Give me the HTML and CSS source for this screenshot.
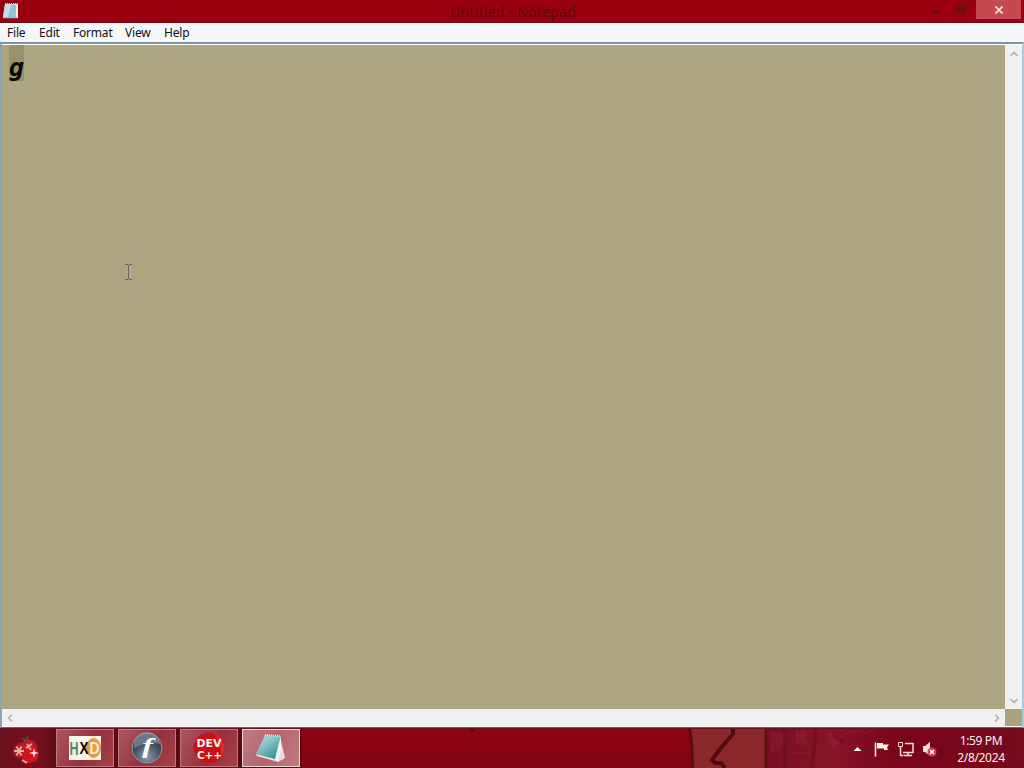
FILE: index.html
```html
<!DOCTYPE html>
<html lang="en">
<head>
<meta charset="UTF-8" />
<meta name="viewport" content="width=device-width, initial-scale=1" />
<title>Untitled - Notepad</title>
<link rel="stylesheet" href="styles.css">
</head>
<body>
  <main class="window">
    <header class="titlebar">
      <svg class="app-icon" viewBox="0 0 18 20" aria-hidden="true">
        <path d="M3 4h13v14H1z" fill="#e9f3f5"/>
        <path d="M3 5h11v12H1z" fill="#8fc5d4"/>
        <path d="M3 5h6L6 17H1z" fill="#bfe0e8"/>
        <path d="M3 4h13" stroke="#d8d2c4" stroke-width="2" stroke-dasharray="1 1"/>
        <path d="M1 18h14" stroke="#647f86"/>
      </svg>
      <h1>Untitled - Notepad</h1>
      <div class="controls">
        <svg class="min-max" viewBox="0 0 48 22" aria-hidden="true">
          <path d="M5 12h6" stroke="#5c100d" stroke-width="2.5"/>
          <path d="M28 7.5h9v6h-9z" fill="#680d10"/>
          <path d="M30 5h8v5" stroke="#5c180c" fill="none" stroke-width="2"/>
        </svg>
        <button class="close" aria-label="Close">
          <svg viewBox="0 0 10 10"><path d="M1.5 1.5l7 7M8.5 1.5l-7 7" stroke="#fff3e8" stroke-width="1.7"/></svg>
        </button>
      </div>
    </header>

    <nav class="menu">
      <span class="menu-file">File</span>
      <span class="menu-edit">Edit</span>
      <span class="menu-format">Format</span>
      <span class="menu-view">View</span>
      <span class="menu-help">Help</span>
    </nav>

    <section class="editor">
      <div class="text-area">
        <span class="selection">g</span>
        <svg class="cursor" viewBox="0 0 10 18" aria-hidden="true">
          <path d="M6 3v12" stroke="#b8a999" stroke-width="2"/>
          <path d="M1 1.5h3M5 1.5h3M1 16.5h3M5 16.5h3M4.5 2v14" stroke="#686054" fill="none"/>
        </svg>
      </div>
      <div class="scroll-y">
        <svg viewBox="0 0 10 8"><path d="M1.5 6L5 2.5 8.5 6" /></svg>
        <svg viewBox="0 0 10 8"><path d="M1.5 2L5 5.5 8.5 2" /></svg>
      </div>
      <div class="scroll-x">
        <svg viewBox="0 0 8 10"><path d="M6 1.5L2.5 5 6 8.5" /></svg>
        <svg viewBox="0 0 8 10"><path d="M2 1.5L5.5 5 2 8.5" /></svg>
      </div>
      <div class="corner"></div>
    </section>
  </main>

  <footer class="taskbar">
    <!-- wallpaper showing through the bar -->
    <svg class="wallpaper" viewBox="0 0 1024 40" preserveAspectRatio="none" aria-hidden="true">
      <defs>
        <linearGradient id="bar" x1="0" y1="0" x2="0" y2="1">
          <stop offset="0" stop-color="#910310"/>
          <stop offset="1" stop-color="#7d0510"/>
        </linearGradient>
        <linearGradient id="left">
          <stop offset="0" stop-color="#69101e"/>
          <stop offset=".12" stop-color="#78101f"/>
          <stop offset=".19" stop-color="#5d0a17"/>
          <stop offset="1" stop-color="#5a0814"/>
        </linearGradient>
        <linearGradient id="tray">
          <stop offset="0" stop-color="#780e22"/>
          <stop offset=".25" stop-color="#87152a"/>
          <stop offset=".5" stop-color="#7a0418"/>
          <stop offset="1" stop-color="#750a1c"/>
        </linearGradient>
      </defs>
      <path d="M0 0h1024v40H0z" fill="url(#bar)"/>
      <path d="M0 0h302v40H0z" fill="url(#left)"/>
      <path d="M690 0h77v40h-74z" fill="#8a2829"/>
      <path d="M690 0l2 18 1 22M766 0v40" stroke="#590b12" stroke-width="2.5" fill="none"/>
      <path d="M733 0v6l-13 15-8 11 3 3 6 0 4 5" stroke="#520b10" stroke-width="4" fill="none"/>
      <path d="M767 0h257v40H767z" fill="url(#tray)"/>
      <path d="M770 3l17 3-7 15-10 5zM795 2h10v12h-8zM825 4l19 3-10 15z" fill="#98263a" opacity=".35"/>
      <path d="M797 2v14h12M793 25h17M842 2l5 4 4-4 4 3 5-3 5 3 9-3" stroke="#a72d3a" fill="none" opacity=".45"/>
      <path d="M785 0v40M816 0l-4 40M833 7l11 7" stroke="#6a0a1d" stroke-width="4" fill="none" opacity=".5"/>
      <path d="M468 0h9l-4 5z" fill="#610713"/>
      <path d="M0 .5h1024" stroke="#64131c"/>
    </svg>

    <div class="apps">
      <button class="start" aria-label="Start">
        <svg viewBox="0 0 32 36">
          <path d="M14 11l-3-5 5 2 2-4 1 5 3 1-4 3z" fill="#49502f"/>
          <circle cx="12" cy="20" r="8.5" fill="#b41525"/>
          <circle cx="19" cy="17" r="8" fill="#c31820"/>
          <circle cx="20" cy="24" r="8.5" fill="#d01521"/>
          <path d="M10 27a9 9 0 0 0 14 5" stroke="#850b18" stroke-width="3" fill="none"/>
          <path d="M4 20h10M6.5 15.5l5 9M11.5 15.5l-5 9M17 13l4 6M22 13l-6 4M12 29l5 3" stroke="#e7ad9f" stroke-width="1.8"/>
          <path d="M24 17l1 4 4 1-4 1-1 4-1-4-4-1 4-1z" fill="#fff4e8"/>
        </svg>
      </button>

      <button class="task" aria-label="HxD">
        <svg class="hxd" viewBox="0 0 32 24">
          <path d="M0 0h32v24H0z" fill="#f7f5e9"/>
          <ellipse cx="24.500" cy="12" rx="7.500" ry="10" fill="#e89c39"/>
          <text class="hxd-h" x="0.5" y="18.5" textLength="9" lengthAdjust="spacingAndGlyphs">H</text>
          <text class="hxd-x" x="10.5" y="18" textLength="9" lengthAdjust="spacingAndGlyphs">X</text>
          <text class="hxd-d" x="20.5" y="18" textLength="10" lengthAdjust="spacingAndGlyphs">D</text>
        </svg>
      </button>

      <button class="task" aria-label="Flash Player">
        <svg class="flash" viewBox="0 0 32 32">
          <defs>
            <radialGradient id="steel" cx=".5" cy=".8">
              <stop offset="0" stop-color="#8a9caa"/>
              <stop offset=".6" stop-color="#57697a"/>
              <stop offset="1" stop-color="#3c4857"/>
            </radialGradient>
          </defs>
          <circle cx="16" cy="16" r="15" fill="url(#steel)" stroke="#8f98a2"/>
          <path d="M3 12a13 12 0 0 1 26 0q-12-3-26 4z" fill="#a9b5bd" opacity=".45"/>
          <text x="11" y="20.5" textLength="11" lengthAdjust="spacingAndGlyphs">f</text>
        </svg>
      </button>

      <button class="task" aria-label="Dev-C++">
        <svg class="dev" viewBox="0 0 32 32">
          <circle cx="16" cy="16" r="15.5" fill="#c91217"/>
          <path d="M21 1a16 16 0 0 1 7 25q1-12-7-25z" fill="#e33b33" opacity=".6"/>
          <text x="3.5" y="14.8" textLength="25" lengthAdjust="spacingAndGlyphs">DEV</text>
          <text x="4" y="26.6" textLength="25" lengthAdjust="spacingAndGlyphs">C++</text>
        </svg>
      </button>

      <button class="task active" aria-label="Notepad">
        <svg class="notepad" viewBox="0 0 32 32">
          <defs>
            <linearGradient id="page" x1="0" y1="0" x2=".7" y2="1">
              <stop offset="0" stop-color="#c3dfdc"/>
              <stop offset=".5" stop-color="#7fc0c3"/>
              <stop offset="1" stop-color="#338f99"/>
            </linearGradient>
          </defs>
          <path d="M25 4l5 22-7 4-3-8z" fill="#dae0db"/>
          <path d="M1 22l20 5 3 3-22-6z" fill="#efede6"/>
          <path d="M10 3l16 1-6 23-19-5z" fill="url(#page)"/>
          <path d="M10 3l16 1" stroke="#e4e2d6" stroke-width="2" stroke-dasharray="1 1"/>
          <path d="M26 4l-6 23 3 3 3-12z" fill="#f6f5ed"/>
        </svg>
      </button>
    </div>

    <div class="tray">
      <svg class="tray-icons" viewBox="0 0 90 20" aria-hidden="true">
        <path d="M1.5 12l4-4 4 4z" fill="#fff"/>
        <path d="M23.5 3.5v14" stroke="#fff3e9" stroke-width="1.5"/>
        <path d="M25 4h6v1.5h6l-2 3 1 2.5h-4V9.5h-7z" fill="#fff3e9"/>
        <path d="M53 4.5h8v9H51M56 14v2.5M52 16.5h8M48.5 8v8.5h3" stroke="#f6dcd3" stroke-width="1.5" fill="none"/>
        <path d="M46.5 3.5h4v4h-4z" stroke="#f6dcd3" fill="none"/>
        <path d="M71 7h2l5-4v14l-5-4h-2z" fill="#f5e0d5"/>
        <circle cx="80" cy="13" r="4.5" fill="#cf3f51"/>
        <path d="M78 11l4 4M82 11l-4 4" stroke="#fff" stroke-width="1.5"/>
      </svg>
      <div class="clock">
        <time>1:59 PM</time>
        <time>2/8/2024</time>
      </div>
    </div>
  </footer>
</body>
</html>
```
FILE: styles.css
```css
/* Reset & base */
*, *::before, *::after {
  box-sizing: border-box;
}

body {
  margin: 0;
  width: 1024px;
  height: 768px;
  overflow: hidden;
  display: flex;
  flex-direction: column;
  font-family: 'Noto Sans', 'Open Sans', sans-serif;
  font-size: 12px;
}

button {
  border: 0;
  padding: 0;
  background: none;
}

svg {
  display: block;
  flex: none;
}

.window {
  height: 728px;
  display: flex;
  flex-direction: column;
}

/* Title bar */
.titlebar {
  height: 23px;
  background: #9a0010;
  border-bottom: 1px solid #6d0b12;
  display: grid;
  grid-template-columns: 448px 130px 1fr;
}

.app-icon {
  width: 18px;
  height: 20px;
  margin-left: 2px;
}

h1 {
  margin: 0;
  font-size: 14px;
  font-weight: 400;
  line-height: 23px;
  text-align: center;
  white-space: nowrap;
  letter-spacing: 0.25px;
  color: #5b0a0c;
}

.controls {
  display: flex;
  justify-content: flex-end;
  padding-right: 3px;
}

.min-max {
  width: 48px;
  height: 22px;
}

.close {
  width: 45px;
  height: 19px;
  background: #c44950;
  display: flex;
  justify-content: center;
  align-items: center;
}

.close svg {
  width: 10px;
  height: 10px;
}

/* Menu */
.menu {
  height: 19px;
  display: flex;
  padding-left: 7px;
  background: #f5f7f8;
  color: #111;
  line-height: 20px;
  letter-spacing: -0.2px;
}

.menu-file {
  width: 32px;
}

.menu-edit {
  width: 34px;
}

.menu-format {
  width: 52px;
}

.menu-view {
  width: 39px;
}

/* Editor */
.editor {
  height: 686px;
  display: grid;
  grid-template-columns: 1003px 17px;
  grid-template-rows: 664px 17px;
  border-style: solid;
  border-width: 2px 2px 1px;
  border-color: #7e9499 #a8cbdc #705d68 #86a5b7;
  padding-top: 1px;
  background: #fff;
}

.text-area {
  position: relative;
  background: #ada480;
  padding-left: 7px;
}

.selection {
  display: block;
  width: 15px;
  height: 36px;
  background: #9a9069;
  font-family: 'DejaVu Sans Mono', monospace;
  font-size: 25px;
  font-style: italic;
  font-weight: 700;
  line-height: 46px;
  color: #080806;
}

.cursor {
  position: absolute;
  left: 122px;
  top: 218px;
  width: 10px;
  height: 18px;
}

.scroll-y,
.scroll-x {
  display: flex;
  justify-content: space-between;
  align-items: center;
  background: #f0f0f1;
}

.scroll-y {
  flex-direction: column;
  padding: 5px 0 4px;
}

.scroll-x {
  padding: 0 4px;
}

.scroll-y svg {
  width: 10px;
  height: 8px;
}

.scroll-x svg {
  width: 8px;
  height: 10px;
}

.scroll-y path,
.scroll-x path {
  fill: none;
  stroke: #b3b3b6;
  stroke-width: 1.7;
}

.corner {
  background: #aaa17e;
}

/* Taskbar */
.taskbar {
  position: relative;
  height: 40px;
  display: flex;
  justify-content: space-between;
}

.wallpaper {
  position: absolute;
  inset: 0;
  width: 100%;
  height: 100%;
}

.apps,
.tray {
  position: relative;
  display: flex;
}

.apps {
  gap: 4px;
  padding-top: 1px;
}

.start {
  width: 52px;
  padding-left: 10px;
}

.start svg {
  width: 32px;
  height: 36px;
}

.task {
  width: 58px;
  height: 38px;
  border: 1px solid #c37780;
  background: linear-gradient(120deg, #ab5862, #96303d 55%, #a34149);
  display: flex;
  justify-content: center;
  align-items: center;
}

.task.active {
  border-color: #efd7d6;
  background: linear-gradient(120deg, #bd7e83, #b6656e 50%, #c17a83);
}

.task svg {
  width: 32px;
  height: 32px;
}

.task .hxd {
  height: 24px;
}

.hxd text {
  font-family: 'Liberation Sans', sans-serif;
  font-weight: 700;
}

.hxd-h {
  font-size: 18px;
  fill: #568667;
}

.hxd-x {
  font-size: 16px;
  fill: #090908;
}

.hxd-d {
  font-size: 17px;
  fill: #f1efe2;
}

.flash {
  overflow: visible;
}

.flash text {
  font-family: 'Liberation Serif', serif;
  font-size: 22px;
  font-style: italic;
  font-weight: 700;
  fill: #fff;
}

.dev text {
  font-family: 'DejaVu Sans', sans-serif;
  font-size: 10px;
  font-weight: 700;
  fill: #fff5ef;
}

/* Tray */
.tray {
  width: 172px;
}

.tray-icons {
  width: 90px;
  height: 20px;
  margin-top: 11px;
}

.clock {
  width: 78px;
  padding-top: 4px;
  display: flex;
  flex-direction: column;
  text-align: center;
  line-height: 17px;
  letter-spacing: -0.35px;
  color: #fff0ed;
}
```
